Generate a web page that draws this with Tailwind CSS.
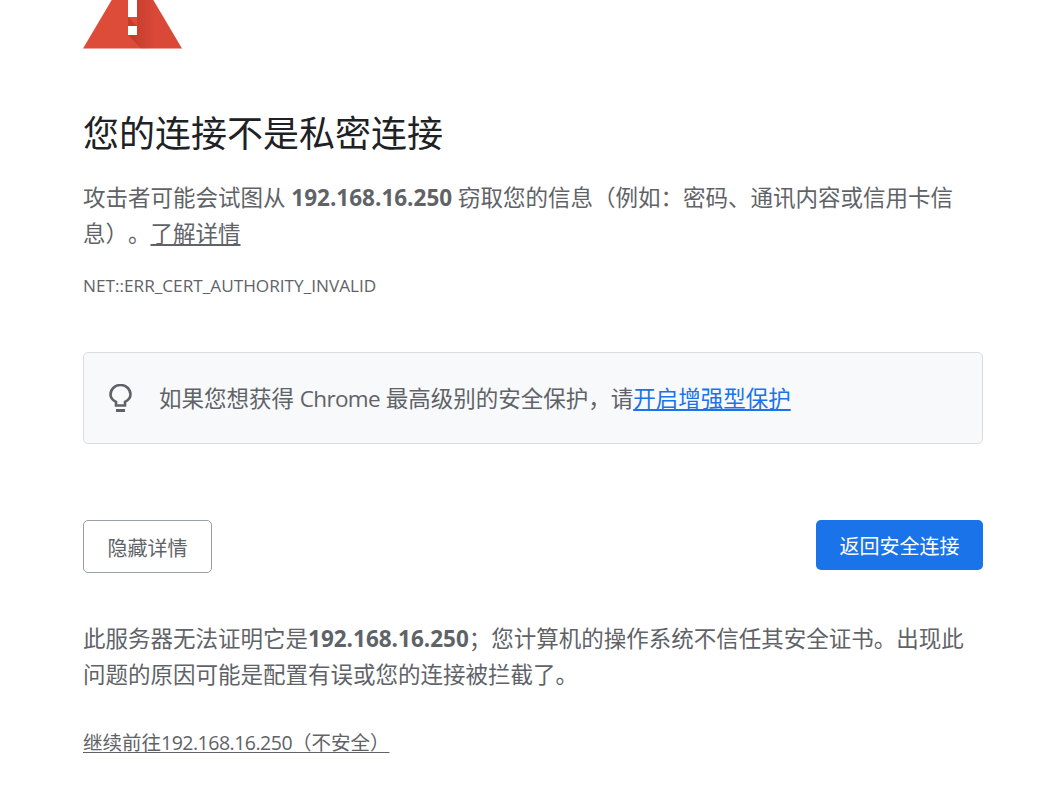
<!DOCTYPE html>
<html lang="zh-CN">
<head>
    <meta charset="UTF-8">
    <title>隐私设置错误</title>
    <script src="https://cdn.jsdelivr.net/npm/@tailwindcss/browser@4"></script>
</head>
<body class="bg-white overflow-hidden font-['Open_Sans','Noto_Sans_CJK_SC',sans-serif] text-[#5f6368] [text-spacing-trim:space-all]">
    <main class="ml-[83px] w-[900px]">
        <!-- Warning icon, scrolled past the top -->
        <svg class="block" width="99" height="49" viewBox="0 0 99 49">
            <defs>
                <linearGradient id="shade" gradientUnits="userSpaceOnUse" x1="50" y1="0" x2="72" y2="0">
                    <stop offset="0" stop-color="#a5281b" stop-opacity="0.42"/>
                    <stop offset="1" stop-color="#a5281b" stop-opacity="0.06"/>
                </linearGradient>
            </defs>
            <polygon points="28.7,0 70.3,0 99,48.5 0,48.5" fill="#dd4b39"/>
            <polygon points="54,0 70.3,0 83,21.5 99,48.5 58,48.5 45,35 45,17 54,26" fill="url(#shade)"/>
            <rect x="45" y="0" width="9" height="17" fill="#fff"/>
            <rect x="45" y="26" width="9" height="9" fill="#fff"/>
        </svg>

        <h1 class="mt-[61px] text-[36px] leading-[48px] font-normal text-[#202124]">您的连接不是私密连接</h1>
        <p class="mt-[22px] text-[22.5px] leading-[36px]">攻击者可能会试图从 <b class="font-bold">192.168.16.250</b> 窃取您的信息（例如：密码、通讯内容或信用卡信息）。<a href="#" class="underline underline-offset-[2px]">了解详情</a></p>
        <div class="mt-[22px] text-[17.2px] leading-[24px]">NET::ERR_CERT_AUTHORITY_INVALID</div>

        <!-- Enhanced protection hint -->
        <div class="mt-[54px] h-[92px] flex items-center rounded-[5px] border border-[#dadce0] bg-[#f8f9fa]">
            <svg class="ml-[25px] shrink-0" width="23" height="29" viewBox="0 0 23 29" fill="none" stroke="#5f6368">
                <path d="M7 21.5v-3.6C3.6 16.2 1.5 13.6 1.5 10.5a10 9.5 0 0 1 20 0c0 3.1-2.1 5.7-5.5 7.4v3.6z" stroke-width="2.6"/>
                <path d="M7 26.5h9" stroke-width="3"/>
            </svg>
            <p class="ml-[27px] pt-[2px] text-[22.5px] leading-[36px]">如果您想获得 <span class="tracking-[-0.7px]">Chrome</span> 最高级别的安全保护，请<a href="#" class="underline underline-offset-[2px] text-[#1a73e8]">开启增强型保护</a></p>
        </div>

        <!-- Buttons -->
        <div class="mt-[76px] flex justify-between">
            <button class="h-[53px] w-[129px] pt-[4px] rounded-[5px] border border-[#9aa0a6] bg-white text-[20px] text-[#5f6368]">隐藏详情</button>
            <button class="h-[50px] w-[167px] pt-[4px] rounded-[5px] bg-[#1a73e8] text-[20px] text-white">返回安全连接</button>
        </div>

        <p class="mt-[48px] text-[22.5px] leading-[36px]">此服务器无法证明它是<b class="font-bold">192.168.16.250</b>；您计算机的操作系统不信任其安全证书。出现此问题的原因可能是配置有误或您的连接被拦截了。</p>
        <a href="#" class="mt-[35px] inline-block text-[19.5px] leading-[30px] underline underline-offset-[2px]">继续前往<span class="tracking-[-0.5px]">192.168.16.250</span>（不安全）</a>
    </main>
</body>
</html>
